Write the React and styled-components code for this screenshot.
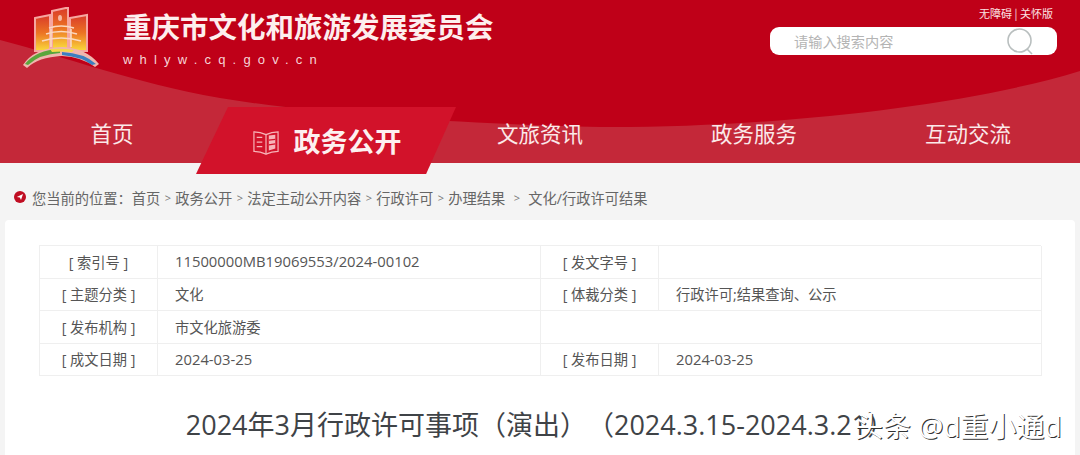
import React from 'react';
import styled, { createGlobalStyle } from 'styled-components';

const GlobalStyle = createGlobalStyle`
  html, body {
    margin: 0;
    padding: 0;
    height: 455px;
    overflow: hidden;
    background: #f4f4f4;
    font-family: "Open Sans", "Noto Sans CJK SC", sans-serif;
    text-spacing-trim: space-all;
  }
`;

const Page = styled.div`
  width: 1080px;
  height: 455px;
  overflow: hidden;
  position: relative;
`;

const Header = styled.header`
  height: 163px;
  background: #bf0018;
  position: relative;
  display: flex;
  flex-direction: column;
  &::before {
    content: '';
    position: absolute;
    inset: 0;
    background: #c42839;
    clip-path: path('M0 40 C70 58 130 82 220 98 C330 116 470 124 600 127 C760 128 960 108 1080 71 L1080 163 L0 163 Z');
  }
`;

const TopRow = styled.div`
  position: relative;
  height: 107px;
  display: flex;
  justify-content: space-between;
  padding: 7px 23px 0 22px;
  box-sizing: border-box;
`;

const Brand = styled.div`
  display: flex;
  align-items: flex-start;
  gap: 23px;
`;

const BrandText = styled.div`
  display: flex;
  flex-direction: column;
`;

const SiteTitle = styled.h1`
  margin: -1px 0 0;
  font-family: "Noto Sans CJK SC", sans-serif;
  font-size: 28.5px;
  line-height: 40px;
  font-weight: 700;
  color: #fdeeee;
  white-space: nowrap;
`;

const SiteUrl = styled.div`
  margin-top: 5px;
  font-family: "Liberation Sans", sans-serif;
  font-size: 13px;
  line-height: 18px;
  letter-spacing: 7.2px;
  color: #f6d4d6;
`;

const Tools = styled.div`
  width: 287px;
  display: flex;
  flex-direction: column;
  align-items: flex-end;
`;

const ToolLinks = styled.div`
  font-family: "Noto Sans CJK SC", sans-serif;
  font-size: 11px;
  line-height: 12px;
  color: #fbe3e3;
  margin: 0 4px 8px 0;
  white-space: nowrap;
`;

const Search = styled.div`
  width: 287px;
  height: 28px;
  border-radius: 9px;
  background: #fff;
  display: flex;
  align-items: center;
  justify-content: space-between;
  padding: 0 24px;
  box-sizing: border-box;
  font-size: 14.2px;
  color: #b4b4b4;
`;

const Nav = styled.nav`
  position: relative;
  height: 56px;
  padding: 0 5px;
  display: grid;
  grid-template-columns: repeat(5, 214px);
`;

const NavItem = styled.a`
  font-size: 21.5px;
  line-height: 54px;
  text-align: center;
  color: #fbe9e9;
`;

const ActiveTab = styled.a`
  height: 67px;
  margin: 0 -23px;
  background: #d2122a;
  clip-path: polygon(12.3% 0, 100% 0, 88.5% 100%, 0 100%);
  display: flex;
  align-items: center;
  justify-content: center;
  gap: 14px;
  padding-left: 1px;
  font-size: 27px;
  font-weight: 700;
  color: #fdf0f0;
`;

const BookSvg = styled.svg`
  margin-top: 5px;
  flex-shrink: 0;
`;

const Crumbs = styled.div`
  height: 57px;
  display: flex;
  align-items: center;
  padding: 11px 0 0 14px;
  box-sizing: border-box;
  font-size: 14.25px;
  color: #666;
  white-space: nowrap;
`;

const CrumbLead = styled.span`
  margin-left: 6px;
`;

const CrumbSep = styled.span`
  width: ${(p) => (p.$wide ? '23px' : '15px')};
  text-align: center;
  font-size: 11px;
  color: #777;
`;

const Card = styled.main`
  position: relative;
  margin: 0 5px;
  height: 235px;
  background: #fff;
  border-radius: 4px 4px 0 0;
  padding: 25px 34px 0;
  box-sizing: border-box;
`;

const MetaTable = styled.div`
  display: grid;
  grid-template-columns: 118px 383px 118px 383px;
  grid-auto-rows: 32.5px;
  border-top: 1px solid #efefef;
  border-left: 1px solid #efefef;
`;

const Cell = styled.div`
  grid-column: span ${(p) => p.$span || 1};
  border-right: 1px solid #efefef;
  border-bottom: 1px solid #efefef;
  font-size: ${(p) => (p.$num ? '14.8px' : '14.25px')};
  color: #555;
  display: flex;
  align-items: center;
  padding: 0 0 1px ${(p) => (p.$label ? 0 : '17px')};
  justify-content: ${(p) => (p.$label ? 'center' : 'flex-start')};
  white-space: nowrap;
`;

const ArticleTitle = styled.h2`
  margin: 31px -34px 0;
  font-size: 27px;
  line-height: 36px;
  font-weight: 400;
  text-align: center;
  color: #3f4347;
  white-space: nowrap;
`;

const Watermark = styled.div`
  position: absolute;
  left: 850px;
  top: 188px;
  font-size: 28px;
  line-height: 36px;
  color: #fff;
  white-space: nowrap;
  text-shadow: 1px 1px 0 #333, -1px 0 0 #fff;
`;

const Logo = () => (
  <svg width="78" height="62" viewBox="0 0 78 62" style={{ flexShrink: 0 }}>
    <defs>
      <linearGradient id="tower" x1="0" y1="0" x2="0" y2="1">
        <stop offset="0" stopColor="#d93a2a" />
        <stop offset="0.5" stopColor="#ec7424" />
        <stop offset="1" stopColor="#fadb3c" />
      </linearGradient>
    </defs>
    <g fill="url(#tower)" stroke="#f6a6a0" strokeWidth="2">
      <path d="M13 11 L28 8 V44 H13 Z" />
      <path d="M48 11 L65 8 V44 H48 Z" />
      <path d="M30 4 L46 0.5 V42 H30 Z" />
    </g>
    <g fill="none" stroke="#fbd9c0" strokeWidth="1.6">
      <path d="M27 21 Q39 17 52 21" />
      <path d="M24 27 Q39 22 55 27" />
      <path d="M20 34 Q39 28 59 34" />
      <path d="M29 22 V40 M49 22 V40" />
    </g>
    <ellipse cx="38" cy="11" rx="2" ry="3" fill="#f6b9a5" />
    <path d="M1 58 Q12 41 40 40 Q64 41 77 57 L73 60 Q60 50 40 49 Q16 50 5 61 Z" fill="#f0b6ae" />
    <path d="M3 57 Q14 43 38 42 L38 46 Q18 47 6 58 Z" fill="#5aa63c" />
    <path d="M28 42 Q40 41 52 43 L50 45 Q40 44 30 45 Z" fill="#f4d94a" />
    <path d="M40 45 Q62 46 74 57 L70 58 Q60 50 40 48 Z" fill="#3c7fc0" />
  </svg>
);

const SearchIcon = () => (
  <svg width="26" height="27" viewBox="0 0 26 27" fill="none" stroke="#b9bfbf" strokeWidth="1.6">
    <circle cx="12.5" cy="12.5" r="11.5" />
    <path d="M20 21 L25 26" />
  </svg>
);

const BookIcon = () => (
  <BookSvg width="28" height="26" viewBox="0 0 30 28" fill="none" stroke="#f7b4b8" strokeWidth="1.3">
    <path d="M15 5 Q9 2 2 2 V23 Q9 23 15 26 Q21 23 28 23 V2 Q21 2 15 5 Z" />
    <path d="M15 5 V26" />
    <path d="M5 8 H11 M5 13 H11 M5 18 H11" />
    <path d="M18 6 L25 5 V20 L18 22 Z" fill="#f7b4b8" stroke="none" />
    <path d="M18 11 L25 10 M18 16 L25 15" stroke="#d2122a" />
  </BookSvg>
);

const PinIcon = () => (
  <svg width="12" height="12" viewBox="0 0 12 12" style={{ flexShrink: 0 }}>
    <circle cx="6" cy="6" r="6" fill="#c00d22" />
    <path d="M2.8 6 L9 3 L7 9 L5.8 6.6 Z" fill="#fff" />
  </svg>
);

const metaRows = [
  ['[ 索引号 ]', '11500000MB19069553/2024-00102', '[ 发文字号 ]', ''],
  ['[ 主题分类 ]', '文化', '[ 体裁分类 ]', '行政许可;结果查询、公示'],
  ['[ 发布机构 ]', '市文化旅游委', ''],
  ['[ 成文日期 ]', '2024-03-25', '[ 发布日期 ]', '2024-03-25'],
];

const crumbs = ['首页', '政务公开', '法定主动公开内容', '行政许可', '办理结果', '文化/行政许可结果'];

export default function App() {
  return (
    <Page>
      <GlobalStyle />
      <Header>
        <TopRow>
          <Brand>
            <Logo />
            <BrandText>
              <SiteTitle>重庆市文化和旅游发展委员会</SiteTitle>
              <SiteUrl>whlyw.cq.gov.cn</SiteUrl>
            </BrandText>
          </Brand>
          <Tools>
            <ToolLinks>无障碍 | 关怀版</ToolLinks>
            <Search>
              请输入搜索内容
              <SearchIcon />
            </Search>
          </Tools>
        </TopRow>
        <Nav>
          <NavItem>首页</NavItem>
          <ActiveTab>
            <BookIcon />
            政务公开
          </ActiveTab>
          <NavItem>文旅资讯</NavItem>
          <NavItem>政务服务</NavItem>
          <NavItem>互动交流</NavItem>
        </Nav>
      </Header>
      <Crumbs>
        <PinIcon />
        <CrumbLead>您当前的位置：</CrumbLead>
        {crumbs.map((name, i) => (
          <React.Fragment key={name}>
            {i > 0 && <CrumbSep $wide={i === crumbs.length - 1}>&gt;</CrumbSep>}
            {name}
          </React.Fragment>
        ))}
      </Crumbs>
      <Card>
        <MetaTable>
          {metaRows.flatMap((row, r) =>
            row.map((text, c) => (
              <Cell
                key={`${r}-${c}`}
                $label={c % 2 === 0 && text !== ''}
                $num={/^\d/.test(text)}
                $span={row.length === 3 && c === 2 ? 2 : 1}
              >
                {text}
              </Cell>
            ))
          )}
        </MetaTable>
        <ArticleTitle>2024年3月行政许可事项（演出）（2024.3.15-2024.3.21）</ArticleTitle>
        <Watermark>头条 @d重小通d</Watermark>
      </Card>
    </Page>
  );
}
